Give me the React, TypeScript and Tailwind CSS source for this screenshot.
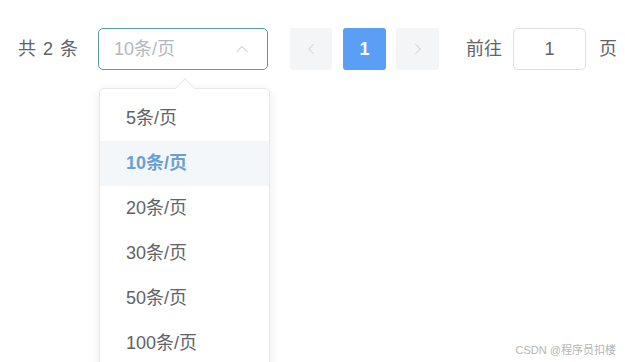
import { ChevronLeft, ChevronRight, ChevronUp } from "lucide-react";

const sizes = [5, 10, 20, 30, 50, 100];

export default function App() {
  return (
    <div
      className="relative w-[625px] h-[362px] overflow-hidden bg-white text-[#606266]"
      style={{ fontFamily: '"Liberation Sans", "Noto Sans CJK SC", sans-serif' }}
    >
      <div className="flex items-center pt-[28px] pl-[18px]">
        <span className="text-[18px] tracking-[1px] whitespace-nowrap w-[58px]">共 2 条</span>

        <div className="relative ml-[22px]">
          <div className="flex items-center justify-between w-[170px] h-[42px] border border-[#5b9aa9] rounded-[5px] pl-[15px] pr-[15px]">
            <span className="text-[18px] text-[#b4b7bd]">10条/页</span>
            <ChevronUp size={20} strokeWidth={1.1} className="text-[#b4b7bd]" />
          </div>

          <div className="absolute left-[1px] top-[60px] w-[171px] bg-white border border-[#e6e8ec] rounded-[5px] shadow-[0_2px_12px_rgba(0,0,0,0.08)] pt-[7px] pb-[8px]">
            <div className="absolute left-[78px] -top-[8px] w-[14px] h-[14px] rotate-45 bg-white border-l border-t border-[#e6e8ec]" />
            {sizes.map((s) => (
              <div
                key={s}
                className={
                  s === 10
                    ? "relative h-[45px] flex items-center pl-[26px] text-[18px] font-bold text-[#6a9fd3] bg-[#f4f7fa]"
                    : "relative h-[45px] flex items-center pl-[26px] text-[18px] text-[#606266]"
                }
              >
                {s}条/页
              </div>
            ))}
          </div>
        </div>

        <button className="ml-[22px] w-[42px] h-[42px] rounded-[3px] bg-[#f4f5f7] flex items-center justify-center">
          <ChevronLeft size={18} strokeWidth={1.1} className="text-[#c0c4cc]" />
        </button>
        <button className="ml-[11px] w-[43px] h-[42px] rounded-[3px] bg-[#5a9ef5] text-white text-[18px] font-bold flex items-center justify-center">
          1
        </button>
        <button className="ml-[10px] w-[43px] h-[42px] rounded-[3px] bg-[#f4f5f7] flex items-center justify-center">
          <ChevronRight size={18} strokeWidth={1.1} className="text-[#c0c4cc]" />
        </button>

        <span className="ml-[27px] text-[18px]">前往</span>
        <div className="ml-[11px] w-[73px] h-[42px] border border-[#dcdfe6] rounded-[5px] flex items-center justify-center text-[18px]">
          1
        </div>
        <span className="ml-[13px] text-[18px]">页</span>
      </div>

      <div className="absolute right-[9px] bottom-[4px] text-[11px] text-[#b5b5b5]">CSDN @程序员扣楼</div>
    </div>
  );
}
